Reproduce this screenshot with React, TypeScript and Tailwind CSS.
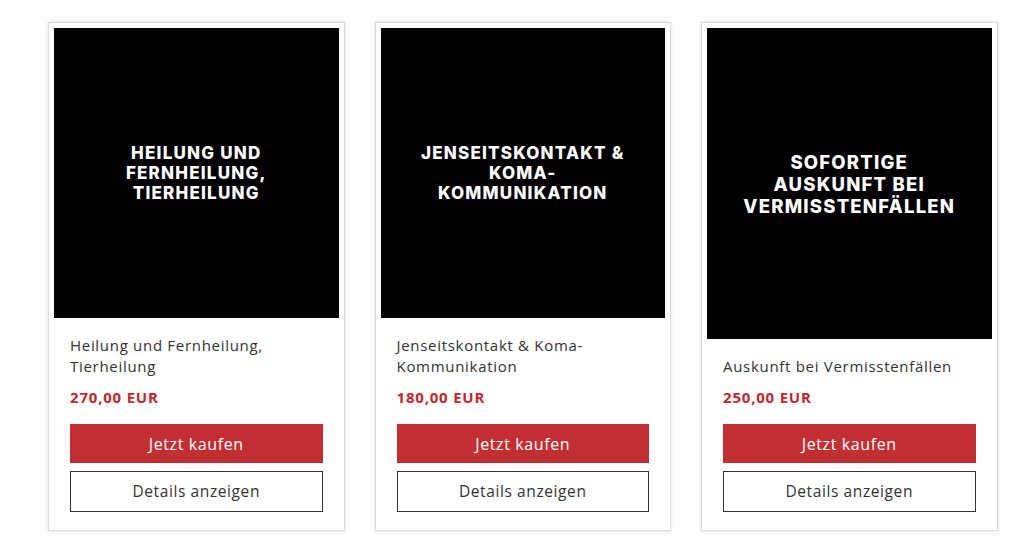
const products = [
  {
    cover: ["HEILUNG UND", "FERNHEILUNG,", "TIERHEILUNG"],
    coverSize: "text-[17px] leading-[20px]",
    imgH: "h-[290px]",
    title: "Heilung und Fernheilung, Tierheilung",
    price: "270,00 EUR",
  },
  {
    cover: ["JENSEITSKONTAKT &", "KOMA-", "KOMMUNIKATION"],
    coverSize: "text-[17px] leading-[20px]",
    imgH: "h-[290px]",
    title: "Jenseitskontakt & Koma-Kommunikation",
    price: "180,00 EUR",
  },
  {
    cover: ["SOFORTIGE", "AUSKUNFT BEI", "VERMISSTENFÄLLEN"],
    coverSize: "text-[18.5px] leading-[22px]",
    imgH: "h-[311px]",
    title: "Auskunft bei Vermisstenfällen",
    price: "250,00 EUR",
  },
]

function ProductCard({ p }: { p: (typeof products)[number] }) {
  return (
    <div className="w-[296.5px] shrink-0 border border-[#dcdcdc] bg-white p-[5px] pb-[18px] shadow-[0_0_4px_rgba(0,0,0,0.12)] flex flex-col">
      <div
        className={`${p.imgH} w-full bg-black flex flex-col items-center justify-center text-center text-white font-extrabold tracking-[1.2px] ${p.coverSize}`}
        style={{ fontFamily: "Inter, 'Open Sans', sans-serif" }}
      >
        {p.cover.map((l) => (
          <span key={l}>{l}</span>
        ))}
      </div>
      <div className="px-[16px] pt-[17px]">
        <p className="text-[15px] leading-[21px] text-[#333] tracking-[0.7px]">
          {p.title}
        </p>
        <p className="mt-[10px] text-[15px] leading-[20px] font-bold text-[#c1282d] tracking-[0.8px]">
          {p.price}
        </p>
        <button className="mt-[17px] w-full h-[39px] bg-[#c22f33] text-white text-[16px] tracking-[0.6px]">
          Jetzt kaufen
        </button>
        <button className="mt-[8px] w-full h-[41px] border border-[#333] bg-white text-[#333] text-[15.5px] tracking-[0.6px]">
          Details anzeigen
        </button>
      </div>
    </div>
  )
}

export default function App() {
  return (
    <div
      className="w-[1032px] h-[560px] bg-white pt-[22px] pl-[48px] flex items-start gap-[30px]"
      style={{ fontFamily: "'Open Sans', sans-serif" }}
    >
      {products.map((p) => (
        <ProductCard key={p.price} p={p} />
      ))}
    </div>
  )
}
